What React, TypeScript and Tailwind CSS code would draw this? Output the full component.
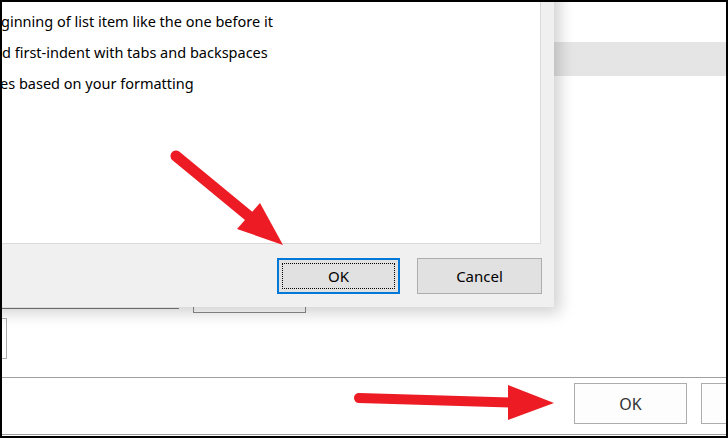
const font = "font-['Noto_Sans',sans-serif]";

function Arrows() {
  return (
    <svg
      className="absolute -left-[2px] -top-[2px] pointer-events-none"
      width="728"
      height="438"
      viewBox="0 0 728 438"
    >
      <line x1="176" y1="156" x2="250" y2="217" stroke="#ed1c24" strokeWidth="11" strokeLinecap="round" />
      <polygon points="283,245 237,229 260,203" fill="#ed1c24" />
      <line x1="359" y1="398" x2="512" y2="402.5" stroke="#ed1c24" strokeWidth="10" strokeLinecap="round" />
      <polygon points="554,403 508,385 508,420" fill="#ed1c24" />
    </svg>
  );
}

function Dialog() {
  const lines = [
    { t: "ginning of list item like the one before it", cls: "-ml-[1px]" },
    { t: "d first-indent with tabs and backspaces", cls: "" },
    { t: "es based on your formatting", cls: "-ml-[2px]" },
  ];
  return (
    <div className="absolute -left-[100px] -top-[30px] w-[652px] h-[335px] bg-[#f0f0f0] shadow-[3px_3px_14px_3px_rgba(0,0,0,0.18)] pt-[13px] pl-[13px] pr-[13px] flex flex-col">
      <div className="h-[259px] bg-white border border-[#d9d9d9] pl-[86px] pt-[20px] overflow-hidden">
        {lines.map((l, i) => (
          <div key={i} className={`${font} text-[14.5px] leading-[31px] text-black whitespace-nowrap ${l.cls}`}>
            {l.t}
          </div>
        ))}
      </div>
      <div className="flex justify-end gap-[17px] mt-[14px] -mr-[1px]">
        <div className="w-[123px] h-[36px] border-2 border-[#0078d7] bg-[#e1e1e1] p-[3px]">
          <div className={`h-full border border-dotted border-black flex items-center justify-center ${font} text-[15px] text-black`}>
            OK
          </div>
        </div>
        <div className={`w-[125px] h-[36px] border border-[#adadad] bg-[#e1e1e1] flex items-center justify-center ${font} text-[15px] text-black`}>
          Cancel
        </div>
      </div>
    </div>
  );
}

export default function App() {
  return (
    <div className="relative w-[728px] h-[438px] overflow-hidden bg-white border-2 border-black">
      <div className="flex flex-col h-full">
        <div className="h-[40px] shrink-0" />
        <div className="h-[34px] shrink-0 bg-[#e5e5e5]" />
        <div className="flex items-start mt-[206px] shrink-0">
          <div className="w-[177px] h-[27px] border-b border-[#7a7a7a]" />
          <div className="ml-[14px] w-[113px] h-[31px] border border-[#8c8c8c]" />
        </div>
        <div className="mt-[5px] w-[5px] h-[41px] border border-l-0 border-[#adadad] shrink-0" />
        <div className="mt-[18px] border-t border-b border-[#a0a0a0] pt-[5px] pb-[10px] flex justify-end gap-[14px] overflow-hidden shrink-0">
          <div className={`w-[113px] h-[41px] shrink-0 border border-[#adadad] bg-[#fdfdfd] flex items-center justify-center ${font} text-[16px] text-[#333]`}>
            OK
          </div>
          <div className="w-[113px] h-[41px] shrink-0 -mr-[88px] border border-[#adadad] bg-[#fdfdfd]" />
        </div>
      </div>
      <Dialog />
      <Arrows />
    </div>
  );
}
